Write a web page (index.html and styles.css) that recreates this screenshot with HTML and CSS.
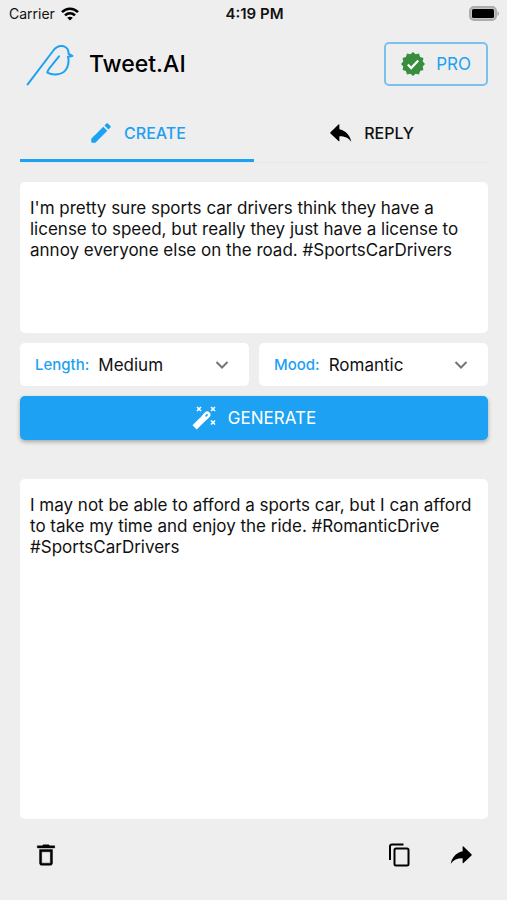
FILE: index.html
```html
<!DOCTYPE html>
<html lang="en">
<head>
  <meta charset="UTF-8">
  <meta name="viewport" content="width=device-width, initial-scale=1.0">
  <title>Tweet.AI</title>
  <link rel="stylesheet" href="styles.css">
</head>
<body>
  <div class="status-bar">
    <div class="carrier">
      <span>Carrier</span>
      <svg width="18" height="14" viewBox="0 0 18 14" fill="none" stroke="#000" stroke-width="2.6">
        <path d="M1 5.200C5.500.6 12.500.6 17 5.200"/>
        <path d="M4 8.400c3-2.800 7-2.800 10 0"/>
        <path d="M9 13.600 6.200 10.800c1.600-1.400 4-1.400 5.600 0z" fill="#000" stroke="none"/>
      </svg>
    </div>
    <span class="time">4:19 PM</span>
    <div class="battery">
      <svg width="31" height="15" viewBox="0 0 31 15">
        <rect x="1" y="1" width="26" height="13" rx="4" fill="#c4c4c4" stroke="#acacac" stroke-width="2"/>
        <rect x="3" y="3" width="22" height="9" rx="1.500" fill="#000"/>
        <path d="M28.500 5v5c2-1 2-4 0-5z" fill="#a5a5a5"/>
      </svg>
    </div>
  </div>

  <header class="header">
    <svg class="logo" width="48" height="42" viewBox="19 32 144 126" fill="none" stroke="#1da1f2" stroke-width="6" stroke-linecap="round" stroke-linejoin="round">
      <path d="M24 153 100 53C110 38 122 36 133 39 142 42 147 51 147 62L158 68 145 70C149 84 145 101 138 110 128 124 101 128 83 118 84 109 92 101 98 94L118 69"/>
    </svg>
    <h1>Tweet.AI</h1>
    <button type="button" class="pro-button">
      <svg width="24" height="24" viewBox="0 0 24 24">
        <path d="M24 12 21.700 14.600 22.400 18 19.100 19.100 18 22.400 14.600 21.700 12 24 9.400 21.700 6 22.400 4.900 19.100 1.600 18 2.300 14.600 0 12 2.300 9.400 1.600 6 4.900 4.900 6 1.600 9.400 2.300 12 0 14.600 2.300 18 1.600 19.100 4.900 22.400 6 21.700 9.400z" fill="#388e3c"/>
        <path d="m6.800 12.600 3.400 3.500 7-7.500" fill="none" stroke="#fff" stroke-width="2.200"/>
      </svg>
      PRO
    </button>
  </header>

  <nav class="tabs">
    <button type="button" class="tab active">
      <svg width="26" height="26" viewBox="0 0 24 24" fill="currentColor">
        <path d="M3 17.200v2.800q0 1 1 1h2.800L17.800 9.900l-3.700-3.700zM20.700 7c.4-.4.4-1 0-1.400l-2.300-2.300c-.4-.4-1-.4-1.400 0l-1.800 1.800 3.700 3.700z"/>
      </svg>
      CREATE
    </button>
    <button type="button" class="tab">
      <svg width="26" height="26" viewBox="0 0 24 24" fill="#000">
        <path d="M10.500 8.500V4.500q0-1-.8-.3L2.300 11.200q-.5.600 0 1.200l7.400 7q.8.700.8-.3v-4.100c5 0 8.500 1.600 11 5.100-1-5-4-10-11-11.600z"/>
      </svg>
      REPLY
    </button>
  </nav>

  <main class="content">
    <textarea class="prompt" aria-label="Tweet idea">I'm pretty sure sports car drivers think they have a license to speed, but really they just have a license to annoy everyone else on the road. #SportsCarDrivers</textarea>

    <div class="options">
      <div class="option">
        <label for="length">Length:</label>
        <select id="length">
          <option>Short</option>
          <option selected>Medium</option>
          <option>Long</option>
        </select>
        <svg width="14" height="10" viewBox="0 0 14 10" fill="none" stroke="#757575" stroke-width="2">
          <path d="m1.500 2 5.500 5.500L12.500 2"/>
        </svg>
      </div>
      <div class="option">
        <label for="mood">Mood:</label>
        <select id="mood">
          <option>Funny</option>
          <option selected>Romantic</option>
          <option>Serious</option>
        </select>
        <svg width="14" height="10" viewBox="0 0 14 10" fill="none" stroke="#757575" stroke-width="2">
          <path d="m1.500 2 5.500 5.500L12.500 2"/>
        </svg>
      </div>
    </div>

    <button type="button" class="generate">
      <svg width="24" height="26" viewBox="0 0 24 26" fill="none" stroke="#fff">
        <path d="M2.600 22.400 14.200 10.800" stroke-width="6"/>
        <path d="M13.600 11.400 15.200 9.800" stroke-width="6.500" stroke-linecap="round"/>
        <path d="m13.600 11.400 2-2" stroke="#1da1f2" stroke-width="1.500"/>
        <path d="m5 2 4 4m0-4-4 4M19 2l4 4m0-4-4 4M19 15.500l4 4m0-4-4 4" stroke-width="1.600"/>
      </svg>
      GENERATE
    </button>

    <textarea class="result" aria-label="Generated tweet" readonly>I may not be able to afford a sports car, but I can afford to take my time and enjoy the ride. #RomanticDrive #SportsCarDrivers</textarea>
  </main>

  <footer class="actions">
    <button type="button" class="delete" aria-label="Delete">
      <svg width="26" height="26" viewBox="0 0 24 24" stroke="#000" stroke-width=".4">
        <path d="M6 19.500c0 1.100.9 2 2 2h8c1.100 0 2-.9 2-2V7H6zM8 9h8v10.500H8zM15.500 3.500l-1-1h-5l-1 1H4v2h16v-2z"/>
      </svg>
    </button>
    <button type="button" aria-label="Copy">
      <svg width="26" height="26" viewBox="0 0 26 26" fill="none" stroke="#000" stroke-width="2">
        <path d="M3 18V4.500Q3 2.500 5 2.500H16.500"/>
        <rect x="7.500" y="6.500" width="14" height="17" rx="1.500"/>
      </svg>
    </button>
    <button type="button" aria-label="Share">
      <svg width="26" height="26" viewBox="0 0 24 24">
        <path d="M13.500 8.500V4.500q0-1 .8-.3l7.400 7q.5.600 0 1.200l-7.400 7q-.8.700-.8-.3v-4.100c-5 0-8.500 1.600-11 5.100 1-5 4-10 11-11.600z"/>
      </svg>
    </button>
  </footer>
</body>
</html>
```
FILE: styles.css
```css
* {
  box-sizing: border-box;
}
body {
  font-family: Inter, "Liberation Sans", sans-serif;
  background-color: #eee;
  color: #111;
  display: flex;
  flex-direction: column;
  min-height: 100vh;
  margin: 0;
}
button,
select,
textarea {
  font-family: inherit;
  font-size: 17px;
  color: inherit;
}
button {
  background: none;
  border: none;
  cursor: pointer;
}
svg {
  flex: none;
}
.status-bar {
  display: grid;
  grid-template-columns: 1fr auto 1fr;
  align-items: center;
  height: 27px;
  padding: 0 7px 0 9px;
  font-size: 14px;
}
.carrier {
  display: flex;
  align-items: center;
  gap: 6px;
}
.time {
  font-size: 15px;
  font-weight: 600;
}
.battery {
  display: flex;
  justify-content: flex-end;
}
.header {
  display: flex;
  align-items: center;
  padding: 15px 19px 0 26px;
}
.logo {
  margin-top: 2px;
}
.header h1 {
  margin: 0 auto 0 15px;
  font-size: 23px;
  font-weight: 500;
  color: #000;
}
.pro-button {
  display: flex;
  align-items: center;
  gap: 11px;
  height: 44px;
  padding: 0 15px;
  border: 2px solid #7cc1ee;
  border-radius: 5px;
  color: #1da1f2;
}
.tabs {
  display: flex;
  margin: 17px 19px 0 20px;
  border-bottom: 1px solid #e8e8e8;
}
.tab {
  display: flex;
  flex: 1;
  align-items: center;
  justify-content: center;
  gap: 10px;
  height: 59px;
  padding: 3px 0 0;
  border-bottom: 3px solid transparent;
  font-size: 16px;
  font-weight: 500;
}
.tab.active {
  color: #1da1f2;
  border-color: #1da1f2;
}
.content {
  display: flex;
  flex: 1;
  flex-direction: column;
  gap: 10px;
  padding: 19px 19px 0 20px;
}
textarea {
  display: block;
  width: 100%;
  padding: 16px 5px 16px 10px;
  background: #fff;
  border: none;
  border-radius: 5px;
  line-height: 21px;
  resize: none;
}
.prompt {
  height: 151px;
}
.options {
  display: flex;
  gap: 10px;
}
.option {
  display: flex;
  flex: 1;
  align-items: center;
  height: 43px;
  padding: 0 20px 0 15px;
  background: #fff;
  border-radius: 5px;
}
.option label {
  font-size: 15px;
  font-weight: 500;
  color: #1da1f2;
}
.option select {
  flex: 1;
  min-width: 0;
  height: 43px;
  margin-right: -14px;
  padding: 0 14px 0 9px;
  appearance: none;
  background: none;
  border: none;
}
.option svg {
  pointer-events: none;
}
.generate {
  display: flex;
  align-items: center;
  justify-content: center;
  gap: 12px;
  height: 44px;
  background-color: #1da1f2;
  color: #fff;
  border-radius: 5px;
  box-shadow: 0 2px 4px rgba(0, 0, 0, 0.3);
}
.result {
  flex: 1;
  margin-top: 29px;
}
.actions {
  display: flex;
  align-items: center;
  gap: 35px;
  height: 81px;
  padding: 0 33px;
}
.actions button {
  display: flex;
  padding: 0;
  margin-bottom: 10px;
}
.actions .delete {
  margin-right: auto;
}
```
